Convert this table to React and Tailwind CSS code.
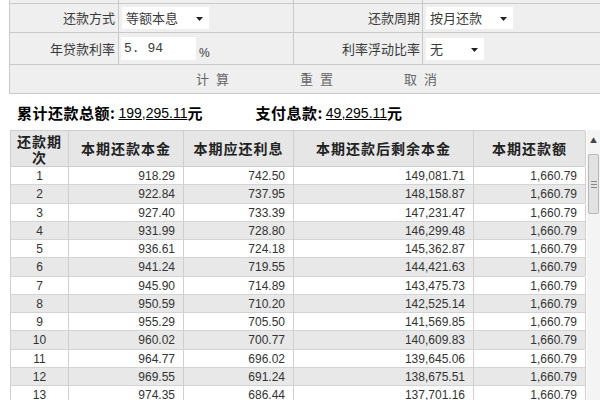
import React from "react";

const rows = [
  ["1", "918.29", "742.50", "149,081.71", "1,660.79"],
  ["2", "922.84", "737.95", "148,158.87", "1,660.79"],
  ["3", "927.40", "733.39", "147,231.47", "1,660.79"],
  ["4", "931.99", "728.80", "146,299.48", "1,660.79"],
  ["5", "936.61", "724.18", "145,362.87", "1,660.79"],
  ["6", "941.24", "719.55", "144,421.63", "1,660.79"],
  ["7", "945.90", "714.89", "143,475.73", "1,660.79"],
  ["8", "950.59", "710.20", "142,525.14", "1,660.79"],
  ["9", "955.29", "705.50", "141,569.85", "1,660.79"],
  ["10", "960.02", "700.77", "140,609.83", "1,660.79"],
  ["11", "964.77", "696.02", "139,645.06", "1,660.79"],
  ["12", "969.55", "691.24", "138,675.51", "1,660.79"],
  ["13", "974.35", "686.44", "137,701.16", "1,660.79"],
];

const cjk = "font-['Noto_Sans_CJK_SC','Noto_Sans',sans-serif]";
const num = "font-['Liberation_Sans',Arial,sans-serif]";

function Arrow() {
  return (
    <svg width="7" height="4" viewBox="0 0 7 4" className="mt-[2px]">
      <path d="M0 0 H7 L3.5 4 Z" fill="#222" />
    </svg>
  );
}

function FakeSelect({ value, width }) {
  return (
    <div className={`flex items-center justify-between bg-white h-[22px] pl-[4px] pr-[6px] ${width}`}>
      <span className="text-[13px] text-[#3a3a3a]">{value}</span>
      <Arrow />
    </div>
  );
}

// 表单区的一行：标签 + 控件 + 标签 + 控件
function FormRow({ h, children }) {
  return (
    <div className={`grid grid-cols-[109px_175px_129px_1fr] border-b border-[#c9c9c9] ${h}`}>
      {children}
    </div>
  );
}

export default function App() {
  return (
    <div className={`w-[600px] h-[400px] overflow-hidden bg-white ${cjk} text-[#3a3a3a]`}>
      {/* 计算器表单 */}
      <div className="ml-[9px] w-[640px] border-l border-[#c9c9c9] bg-[#efefef]">
        <FormRow h="h-[4px]">
          <div className="border-r border-[#c9c9c9]" />
          <div className="border-r border-[#c9c9c9]" />
          <div className="border-r border-[#c9c9c9]" />
          <div />
        </FormRow>
        <FormRow h="h-[29px]">
          <div className="flex items-center justify-end pr-[3px] text-[13px] border-r border-[#c9c9c9]">还款方式</div>
          <div className="flex items-center pl-[3px] border-r border-[#c9c9c9]">
            <FakeSelect value="等额本息" width="w-[87px]" />
          </div>
          <div className="flex items-center justify-end pr-[2px] text-[13px] border-r border-[#c9c9c9]">还款周期</div>
          <div className="flex items-center pl-[3px]">
            <FakeSelect value="按月还款" width="w-[87px]" />
          </div>
        </FormRow>
        <FormRow h="h-[32px]">
          <div className="flex items-center justify-end pr-[3px] text-[13px] border-r border-[#c9c9c9]">年贷款利率</div>
          <div className="flex items-center pl-[2px] border-r border-[#c9c9c9]">
            <div className="bg-white h-[23px] w-[75px] flex items-center pl-[3px] text-[13px] font-['Liberation_Mono',monospace]">5. 94</div>
            <span className={`ml-[3px] mt-[8px] text-[12px] ${num}`}>%</span>
          </div>
          <div className="flex items-center justify-end pr-[2px] text-[13px] border-r border-[#c9c9c9]">利率浮动比率</div>
          <div className="flex items-center pl-[3px]">
            <FakeSelect value="无" width="w-[58px]" />
          </div>
        </FormRow>
        <div className="h-[29px] border-b border-[#c9c9c9] flex items-center pl-[186px] gap-[64px] text-[13px] text-[#666]">
          <span className="tracking-[7px]">计算</span>
          <span className="tracking-[7px]">重置</span>
          <span className="tracking-[7px]">取消</span>
        </div>
      </div>

      {/* 汇总 */}
      <div className="flex items-center h-[18px] mt-[10px] pl-[17px] text-[14px] text-black">
        <span className="font-bold text-[15px] tracking-[0.5px]">累计还款总额:</span>
        <span className={`ml-[3px] underline ${num}`}>199,295.11</span>
        <span className="font-bold text-[15px]">元</span>
        <span className="font-bold text-[15px] tracking-[0.5px] ml-[53px]">支付息款:</span>
        <span className={`ml-[3px] underline ${num}`}>49,295.11</span>
        <span className="font-bold text-[15px]">元</span>
      </div>

      {/* 还款明细表 */}
      <div className="flex mt-[8px] ml-[10px]">
        <div className="w-[575px] border-l border-t border-[#cfcfcf]">
          <div className="grid grid-cols-[58px_115px_110px_180px_112px] h-[36px] bg-[#e6e6e6] border-b border-[#cfcfcf] text-[14px] font-bold text-[#222] tracking-[1px]">
            <div className="flex items-center justify-center text-center leading-[16px] border-r border-[#cfcfcf] px-[2px]">还款期次</div>
            <div className="flex items-center justify-center border-r border-[#cfcfcf]">本期还款本金</div>
            <div className="flex items-center justify-center border-r border-[#cfcfcf]">本期应还利息</div>
            <div className="flex items-center justify-center border-r border-[#cfcfcf]">本期还款后剩余本金</div>
            <div className="flex items-center justify-center border-r border-[#cfcfcf]">本期还款额</div>
          </div>
          {rows.map((r, i) => (
            <div
              key={r[0]}
              className={`grid grid-cols-[58px_115px_110px_180px_112px] h-[18.25px] border-b border-[#d4d4d4] text-[12px] ${num} text-[#333] ${i % 2 === 1 ? "bg-[#e8e8e8]" : "bg-white"}`}
            >
              <div className="flex items-center justify-center border-r border-[#cfcfcf]">{r[0]}</div>
              <div className="flex items-center justify-end pr-[8px] border-r border-[#cfcfcf]">{r[1]}</div>
              <div className="flex items-center justify-end pr-[8px] border-r border-[#cfcfcf]">{r[2]}</div>
              <div className="flex items-center justify-end pr-[8px] border-r border-[#cfcfcf]">{r[3]}</div>
              <div className="flex items-center justify-end pr-[8px] border-r border-[#cfcfcf]">{r[4]}</div>
            </div>
          ))}
        </div>
        {/* 滚动条 */}
        <div className="ml-[2px] w-[13px] flex flex-col items-center bg-[#f4f4f4]">
          <span className="text-[7px] leading-none text-[#444] mt-[7px]">▲</span>
          <div className="mt-[10px] w-[11px] h-[60px] bg-[#e2e2e2] border border-[#b8b8b8] rounded-[2px] flex flex-col items-center justify-center gap-[2px]">
            <div className="w-[6px] h-[1px] bg-[#888]" />
            <div className="w-[6px] h-[1px] bg-[#888]" />
            <div className="w-[6px] h-[1px] bg-[#888]" />
          </div>
        </div>
      </div>
    </div>
  );
}
